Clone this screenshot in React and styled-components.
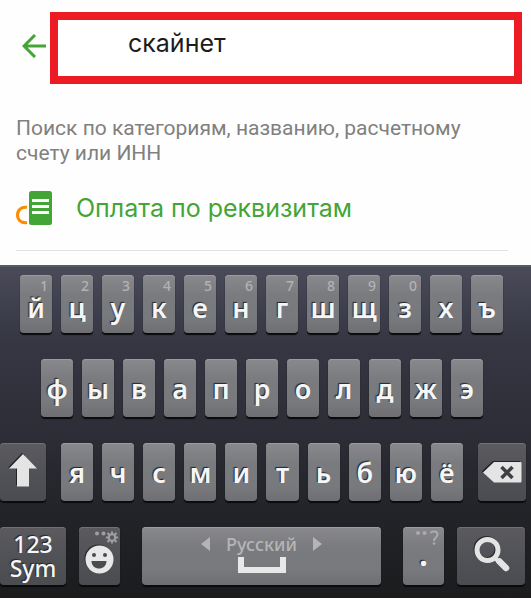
import React, { useState } from "react";
import styled, { createGlobalStyle, css } from "styled-components";

const GlobalStyle = createGlobalStyle`
  *, *::before, *::after { box-sizing: border-box; }
  body { margin: 0; background: #fefefe; }
  button, input { margin: 0; padding: 0; border: 0; font: inherit; color: inherit; background: none; }
  svg { display: block; flex: none; }
`;

const Page = styled.div`
  font-family: Roboto, sans-serif;
`;

const Header = styled.header`
  display: flex;
  align-items: stretch;
  margin-top: 12px;
  padding: 0 9px 0 22px;
`;

const BackButton = styled.button`
  display: flex;
  align-items: center;
  width: 28px;
  height: 68px;
`;

const SearchInput = styled.input`
  flex: 1;
  min-width: 0;
  height: 72px;
  border: 8px solid #ed1c24;
  padding: 0 8px 10px 70px;
  background: #ffffff;
  color: #1c1c1c;
  font-family: "Comic Sans MS", Inter, sans-serif;
  font-size: 25px;
  outline: none;
`;

const Content = styled.main`
  padding: 32px 23px 14px 16px;
`;

const Hint = styled.p`
  margin: 0;
  color: #808080;
  font-size: 21px;
  line-height: 25px;
`;

const PaymentLink = styled.a`
  display: flex;
  align-items: center;
  gap: 24px;
  height: 85px;
  border-bottom: 1px solid #e2e2e2;
  color: #43a535;
  font-family: "Comic Sans MS", Inter, sans-serif;
  font-size: 25px;
  white-space: nowrap;
  text-decoration: none;
`;

const Keyboard = styled.section`
  display: flex;
  flex-direction: column;
  gap: 26px;
  padding: 8px 0 13px;
  border-top: 2px solid #575c60;
  background: linear-gradient(#4a4a59, #363743 22%, #2c2d36 50%, #202124 82%, #1b1c1e);
  color: #f6f6f6;
  font-family: "Noto Sans", sans-serif;
`;

const LetterRow = styled.div`
  display: flex;
  gap: 9px;
  padding-left: ${(p) => p.$start || 0}px;
  padding-right: ${(p) => p.$end || 0}px;
`;

const ShiftRow = styled.div`
  display: grid;
  grid-template-columns: 46fr 401fr 48fr;
  gap: 15px;
  padding-right: 5px;
`;

const BottomRow = styled.div`
  display: grid;
  grid-template-columns: 66fr 41fr 257fr 41fr 68fr;
  gap: 13px;
  padding-right: 6px;
`;

const darkKey = css`
  background: linear-gradient(#5b5a5f, #515257 50%, #4b4c50);
  box-shadow: inset 0 1px #707075, 0 2px 1px #090a0b;
`;

const Key = styled.button`
  position: relative;
  display: flex;
  flex: 1;
  align-items: center;
  justify-content: center;
  min-width: 0;
  height: 58px;
  border-radius: 4px;
  background: linear-gradient(#88888d, #7a7b7f 35%, #78797d 75%, #6f6f73);
  box-shadow: inset 0 1px #9b9ba0, 0 2px 1px #090a0b;
  text-shadow: -1px -1px 1px #252529;
  ${(p) => p.$dark && darkKey}
`;

const IconKey = styled(Key)`
  padding-bottom: 4px;
`;

const LetterKey = styled(Key)`
  padding-top: ${(p) => (p.$low ? 8 : 2)}px;
  font-size: 27px;
  font-weight: 600;
  line-height: 28px;
`;

const KeyHint = styled.span`
  position: absolute;
  top: 4px;
  right: 4px;
  color: #b2b2b5;
  font-size: 14px;
  font-weight: 500;
  line-height: 14px;
  text-shadow: none;
`;

const SymbolsKey = styled(Key)`
  font-size: 23px;
  font-weight: 500;
  line-height: 24px;
`;

const EmojiKey = styled(Key)`
  align-items: flex-end;
  padding: 0 2px 11px 0;
`;

const CornerIcon = styled.svg`
  position: absolute;
  top: 3px;
  right: 2px;
`;

const SpaceKey = styled(Key)`
  flex-direction: column;
  justify-content: flex-start;
  margin: 0 9px;
  padding-top: 4px;
`;

const Language = styled.span`
  display: flex;
  align-items: center;
  gap: 16px;
  height: 25px;
  color: #b5b5b7;
  font-size: 18px;
  font-weight: 500;
  line-height: 22px;
  text-shadow: none;
`;

const PeriodKey = styled(Key)`
  padding-bottom: 6px;
  font-size: 34px;
  font-weight: 600;
  line-height: 40px;
`;

function BackIcon() {
  return (
    <svg width="24" height="24" viewBox="0 0 24 24" fill="none" stroke="#43a535" strokeWidth="3">
      <path d="M24 12H2M13 1 2 12l11 11" />
    </svg>
  );
}

function RequisitesIcon() {
  return (
    <svg width="36" height="34" viewBox="0 0 36 34">
      <rect x="13" y="0" width="23" height="34" rx="2.5" fill="#43a535" />
      <path d="M16 9.5h17M16 15.5h17M16 21.5h17" stroke="#fff" strokeWidth="3" />
      <path d="M11 16.3C5 15.3 1.5 19.5 1.5 24s3.500 8.500 9.500 7.500" fill="none" stroke="#ff8a00" strokeWidth="3" />
    </svg>
  );
}

function ShiftIcon() {
  return (
    <svg width="30" height="34" viewBox="0 0 30 34">
      <path d="M0 14.500 14 0l3 2-2 12v18H8V15z" fill="#222226" />
      <path d="M15 1 29 15.500h-8V33.500H9V15.500H1z" fill="#e4e4e4" />
    </svg>
  );
}

function BackspaceIcon() {
  return (
    <svg width="40" height="22" viewBox="0 0 40 22">
      <path d="M0 10 11 0h27v3H12L1 12z" fill="#222226" />
      <path d="M1 11.500 12 1h26.500q1 0 1 1v18.500q0 1-1 1H12z" fill="#e4e4e4" />
      <path d="m19.500 6 11 11m0-11-11 11" stroke="#3f4044" strokeWidth="3.500" />
    </svg>
  );
}

function SmileIcon() {
  return (
    <svg width="30" height="30" viewBox="0 0 30 30">
      <circle cx="14.500" cy="14.500" r="14" fill="#29292d" />
      <circle cx="15.500" cy="15.500" r="14" fill="#e8e8e8" />
      <circle cx="10" cy="11" r="2" fill="#4b4c50" />
      <circle cx="21" cy="11" r="2" fill="#4b4c50" />
      <path d="M7.500 17h15c0 10-15 10-15 0z" fill="#4b4c50" />
    </svg>
  );
}

function SettingsHintIcon() {
  return (
    <CornerIcon width="24" height="14" viewBox="0 0 24 14">
      <circle cx="3" cy="3.500" r="2" fill="#a0a0a3" />
      <circle cx="9.500" cy="3.500" r="2" fill="#a0a0a3" />
      <g fill="none" stroke="#a0a0a3">
        <circle cx="18" cy="7.500" r="3.200" strokeWidth="2" />
        <path d="M18 4V1.500M18 11v2.500M14.500 7.500H12M21.500 7.500H24M15.500 5l-2-2M20.500 5l2-2M15.500 10l-2 2M20.500 10l2 2" strokeWidth="2" />
      </g>
    </CornerIcon>
  );
}

function QuestionHintIcon() {
  return (
    <CornerIcon width="26" height="16" viewBox="0 0 26 16">
      <circle cx="2" cy="3" r="2" fill="#ababae" />
      <circle cx="8.500" cy="3" r="2" fill="#ababae" />
      <path d="M14.500 3c2-2.500 7-2 7 1.500 0 3-3.500 3-3.500 6.500" fill="none" stroke="#ababae" strokeWidth="2" />
      <circle cx="18" cy="13.500" r="1.300" fill="#ababae" />
    </CornerIcon>
  );
}

function Triangle({ right }) {
  return (
    <svg width="9" height="14" viewBox="0 0 9 14">
      <path d={right ? "M0 0v14l9-7z" : "M9 0v14L0 7z"} fill="#b5b5b7" />
    </svg>
  );
}

function SpaceIcon() {
  return (
    <svg width="48" height="18" viewBox="0 0 48 18">
      <path d="M0 1h6v10h36V1h6v16H0z" fill="#e8e8e8" />
    </svg>
  );
}

function SearchIcon() {
  return (
    <svg width="37" height="36" viewBox="0 0 37 36" fill="none">
      <circle cx="13.500" cy="13" r="10.500" stroke="#29292d" strokeWidth="5" />
      <circle cx="14.500" cy="14" r="10.500" stroke="#e4e4e4" strokeWidth="5" />
      <path d="m22 22 4 4" stroke="#e4e4e4" strokeWidth="4" />
      <path d="m26.500 25.500 6.500 6.500" stroke="#e4e4e4" strokeWidth="6.500" strokeLinecap="round" />
    </svg>
  );
}

const topLetters = "йцукенгшщзхъ".split("");
const topDigits = "1234567890".split("");
const middleLetters = "фывапролджэ".split("");
const lowerLetters = "ячсмитьбюё".split("");

export default function App() {
  const [query, setQuery] = useState("скайнет");
  const type = (text) => setQuery((value) => value + text);

  return (
    <Page>
      <GlobalStyle />
      <Header>
        <BackButton type="button" aria-label="Назад"><BackIcon /></BackButton>
        <SearchInput
          type="text"
          aria-label="Поиск"
          value={query}
          onChange={(event) => setQuery(event.target.value)}
        />
      </Header>
      <Content>
        <Hint>Поиск по категориям, названию, расчетному счету или ИНН</Hint>
        <PaymentLink href="#requisites">
          <RequisitesIcon />
          Оплата по реквизитам
        </PaymentLink>
      </Content>
      <Keyboard aria-label="Клавиатура">
        <LetterRow $start={20} $end={28}>
          {topLetters.map((letter, index) => (
            <LetterKey key={letter} type="button" $low onClick={() => type(letter)}>
              {letter}
              {topDigits[index] && <KeyHint>{topDigits[index]}</KeyHint>}
            </LetterKey>
          ))}
        </LetterRow>
        <LetterRow $start={41} $end={48}>
          {middleLetters.map((letter) => (
            <LetterKey key={letter} type="button" onClick={() => type(letter)}>{letter}</LetterKey>
          ))}
        </LetterRow>
        <ShiftRow>
          <IconKey type="button" $dark aria-label="Shift"><ShiftIcon /></IconKey>
          <LetterRow>
            {lowerLetters.map((letter) => (
              <LetterKey key={letter} type="button" onClick={() => type(letter)}>{letter}</LetterKey>
            ))}
          </LetterRow>
          <Key type="button" $dark aria-label="Удалить" onClick={() => setQuery((value) => value.slice(0, -1))}>
            <BackspaceIcon />
          </Key>
        </ShiftRow>
        <BottomRow>
          <SymbolsKey type="button" $dark>123<br />Sym</SymbolsKey>
          <EmojiKey type="button" $dark aria-label="Смайлы">
            <SettingsHintIcon />
            <SmileIcon />
          </EmojiKey>
          <SpaceKey type="button" onClick={() => type(" ")}>
            <Language><Triangle />Русский<Triangle right /></Language>
            <SpaceIcon />
          </SpaceKey>
          <PeriodKey type="button" onClick={() => type(".")}>
            <QuestionHintIcon />
            .
          </PeriodKey>
          <IconKey type="button" $dark aria-label="Найти"><SearchIcon /></IconKey>
        </BottomRow>
      </Keyboard>
    </Page>
  );
}
